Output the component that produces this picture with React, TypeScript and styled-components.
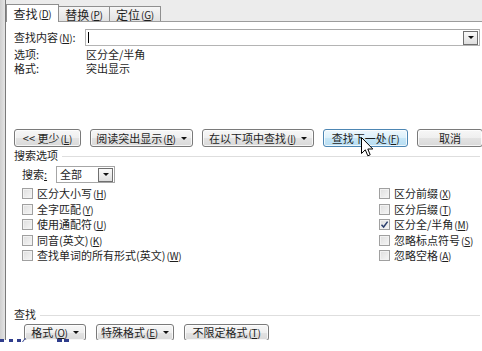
import React from 'react'
import styled, { createGlobalStyle } from 'styled-components'

const GlobalStyle = createGlobalStyle`
  html, body { margin: 0; padding: 0; background: #fff; }
  body {
    width: 482px;
    height: 351px;
    overflow: hidden;
    font-family: "Noto Sans CJK SC", "Liberation Sans", sans-serif;
    font-size: 11px;
    color: #1e1e1e;
  }
`

const Screen = styled.div`
  position: relative;
  width: 482px;
  height: 351px;
  display: flex;
  flex-direction: column;
  overflow: hidden;
`

const Frame = styled.div`
  display: flex;
  height: 340px;
  flex: none;
`

const LeftEdge = styled.div`
  width: 5px;
  flex: none;
  background: linear-gradient(to right, #cfcfcf, #e4e4e4);
  border-right: 1px solid #7a7a7a;
`

const Main = styled.div`
  flex: 1;
  min-width: 0;
  display: flex;
  flex-direction: column;
`

const TabStrip = styled.div`
  height: 21px;
  flex: none;
  background: #ececec;
  border-bottom: 1px solid #9c9c9c;
  display: flex;
  align-items: flex-end;
`

const Tab = styled.div<{ $active?: boolean; $w: number }>`
  box-sizing: border-box;
  width: ${p => p.$w}px;
  height: ${p => (p.$active ? 18 : 15)}px;
  margin-bottom: ${p => (p.$active ? -1 : 0)}px;
  margin-left: ${p => (p.$active ? 0 : -1)}px;
  border: 1px solid #8f8f8f;
  border-bottom: none;
  background: ${p => (p.$active ? '#fff' : 'linear-gradient(#f6f6f6, #e2e2e2)')};
  display: flex;
  align-items: center;
  justify-content: center;
  padding-top: ${p => (p.$active ? 0 : 1)}px;
  position: relative;
  z-index: ${p => (p.$active ? 1 : 0)};
  line-height: 1;
  font-size: 12px;
`

const Panel = styled.div`
  flex: 1;
  background: #fff;
  padding: 7px 2px 0 8px;
  display: flex;
  flex-direction: column;
`

const FindRow = styled.div`
  display: flex;
  align-items: center;
  height: 17px;
`

const FieldLabel = styled.div<{ $w: number }>`
  width: ${p => p.$w}px;
  flex: none;
  line-height: 1;
`

const TextBox = styled.div`
  flex: 1;
  box-sizing: border-box;
  height: 17px;
  border: 1px solid #b4b4b4;
  border-top-color: #a8a8a8;
  display: flex;
  align-items: center;
  justify-content: space-between;
  padding-left: 2px;
`

const Caret = styled.div`
  width: 1px;
  height: 11px;
  background: #000;
`

const DropButton = styled.div`
  box-sizing: border-box;
  width: 15px;
  height: 14px;
  margin-right: 1px;
  border: 1px solid #6f6f6f;
  background: linear-gradient(#fafafa, #dedede);
  display: flex;
  align-items: center;
  justify-content: center;
`

const Triangle = styled.span`
  width: 0;
  height: 0;
  border-left: 3px solid transparent;
  border-right: 3px solid transparent;
  border-top: 3px solid #111;
`

const InfoGrid = styled.div`
  display: grid;
  grid-template-columns: 72px 1fr;
  grid-auto-rows: 14px;
  margin-top: 1px;
  line-height: 14px;
`

const ButtonRow = styled.div<{ $top: number; $left: number; $gap: number }>`
  display: flex;
  gap: ${p => p.$gap}px;
  margin-top: ${p => p.$top}px;
  padding-left: ${p => p.$left}px;
`

const Button = styled.div<{ $w: number; $h?: number; $primary?: boolean }>`
  box-sizing: border-box;
  width: ${p => p.$w}px;
  height: ${p => p.$h ?? 18}px;
  flex: none;
  border: 1px solid ${p => (p.$primary ? '#4d86b3' : '#7a7a7a')};
  border-radius: 3px;
  background: ${p =>
    p.$primary
      ? 'linear-gradient(#eef8fd, #dbf0fb 50%, #c6e6f7 51%, #b7ddf2)'
      : 'linear-gradient(#f7f7f7, #efefef 50%, #e3e3e3 51%, #d9d9d9)'};
  box-shadow: inset 0 0 0 1px rgba(255, 255, 255, 0.75);
  display: flex;
  align-items: center;
  justify-content: center;
  gap: 5px;
  line-height: 1;
  white-space: nowrap;
`

const SectionHead = styled.div<{ $top: number }>`
  display: flex;
  align-items: center;
  gap: 4px;
  height: 14px;
  margin-top: ${p => p.$top}px;
  line-height: 1;
  &::after {
    content: '';
    flex: 1;
    height: 1px;
    margin-top: 2px;
    background: #dedede;
  }
`

const SearchRow = styled.div`
  display: flex;
  align-items: center;
  height: 17px;
  margin-top: 4px;
  padding-left: 8px;
`

const SelectBox = styled.div`
  box-sizing: border-box;
  width: 59px;
  height: 17px;
  border: 1px solid #a6a6a6;
  display: flex;
  align-items: center;
  justify-content: space-between;
  padding-left: 3px;
  line-height: 1;
`

const CheckGrid = styled.div`
  display: grid;
  grid-template-columns: 357px 1fr;
  grid-template-rows: repeat(5, 15.5px);
  grid-auto-flow: column;
  margin-top: 3px;
  padding-left: 8px;
`

const CheckItem = styled.div`
  display: flex;
  align-items: center;
  gap: 4px;
  line-height: 1;
  white-space: nowrap;
`

const Box = styled.div`
  box-sizing: border-box;
  width: 11px;
  height: 11px;
  border: 1px solid #a0a0a0;
  background: linear-gradient(135deg, #dedede, #f6f6f6);
  box-shadow: inset 0 0 0 1px #f2f2f2;
  display: flex;
  align-items: center;
  justify-content: center;
`

const KeyText = styled.span`
  font-size: 10px;
  letter-spacing: -0.2px;
  margin-left: 1px;
`

const Cursor = styled.svg`
  position: absolute;
  left: 361px;
  top: 137px;
`

const BottomStrip = styled.div`
  height: 11px;
  background: #fff;
`

const Marks = styled.svg`
  display: block;
  margin-top: -2px;
`

const Key = ({ k }: { k: string }) => (
  <KeyText>
    (<u>{k}</u>)
  </KeyText>
)

const leftChecks = [
  { label: '区分大小写', k: 'H' },
  { label: '全字匹配', k: 'Y' },
  { label: '使用通配符', k: 'U' },
  { label: '同音(英文)', k: 'K' },
  { label: '查找单词的所有形式(英文)', k: 'W' },
]

const rightChecks = [
  { label: '区分前缀', k: 'X' },
  { label: '区分后缀', k: 'T' },
  { label: '区分全/半角', k: 'M', checked: true },
  { label: '忽略标点符号', k: 'S' },
  { label: '忽略空格', k: 'A' },
]

const Check = ({ label, k, checked }: { label: string; k: string; checked?: boolean }) => (
  <CheckItem>
    <Box>
      {checked && (
        <svg width="9" height="9" viewBox="0 0 9 9">
          <path d="M1.5 4.8 L3.6 7 L7.6 1.6" fill="none" stroke="#2b3f6e" strokeWidth="1.5" />
        </svg>
      )}
    </Box>
    <span>
      {label}
      <Key k={k} />
    </span>
  </CheckItem>
)

export default function App() {
  return (
    <Screen>
      <GlobalStyle />
      <Frame>
        <LeftEdge />
        <Main>
          <TabStrip>
            <Tab $active $w={53}>
              查找<Key k="D" />
            </Tab>
            <Tab $w={52}>
              替换<Key k="P" />
            </Tab>
            <Tab $w={52}>
              定位<Key k="G" />
            </Tab>
          </TabStrip>
          <Panel>
            <FindRow>
              <FieldLabel $w={71}>
                查找内容<Key k="N" />:
              </FieldLabel>
              <TextBox>
                <Caret />
                <DropButton>
                  <Triangle />
                </DropButton>
              </TextBox>
            </FindRow>
            <InfoGrid>
              <span>选项:</span>
              <span>区分全/半角</span>
              <span>格式:</span>
              <span>突出显示</span>
            </InfoGrid>

            <ButtonRow $top={54} $left={0} $gap={9}>
              <Button $w={67}>
                <span>
                  &lt;&lt; 更少<Key k="L" />
                </span>
              </Button>
              <Button $w={103}>
                <span>
                  阅读突出显示<Key k="R" />
                </span>
                <Triangle />
              </Button>
              <Button $w={112}>
                <span>
                  在以下项中查找<Key k="I" />
                </span>
                <Triangle />
              </Button>
              <Button $w={85} $primary>
                <span>
                  查找下一处<Key k="F" />
                </span>
              </Button>
              <Button $w={66}>取消</Button>
            </ButtonRow>

            <SectionHead $top={1}>搜索选项</SectionHead>
            <SearchRow>
              <FieldLabel $w={34}>
                搜索<u>:</u>
              </FieldLabel>
              <SelectBox>
                <span>全部</span>
                <DropButton>
                  <Triangle />
                </DropButton>
              </SelectBox>
            </SearchRow>
            <CheckGrid>
              {leftChecks.map(c => (
                <Check key={c.k} {...c} />
              ))}
              {rightChecks.map(c => (
                <Check key={c.k} {...c} />
              ))}
            </CheckGrid>

            <SectionHead $top={43.5}>查找</SectionHead>
            <ButtonRow $top={3} $left={10} $gap={10}>
              <Button $w={62} $h={17}>
                <span>
                  格式<Key k="O" />
                </span>
                <Triangle />
              </Button>
              <Button $w={78} $h={17}>
                <span>
                  特殊格式<Key k="E" />
                </span>
                <Triangle />
              </Button>
              <Button $w={85} $h={17}>
                <span>
                  不限定格式<Key k="T" />
                </span>
              </Button>
            </ButtonRow>
          </Panel>
        </Main>
      </Frame>
      <BottomStrip>
        <Marks width="80" height="6" viewBox="0 0 80 6">
          <g fill="#2f3d8c">
            <rect x="0" y="1" width="4" height="3" />
            <rect x="9" y="1" width="4" height="3" />
            <rect x="17" y="1" width="4" height="3" />
            <path d="M22 4 L25 0 L26 0 L23 4 Z" />
            <rect x="57" y="1" width="5" height="3" />
            <rect x="64" y="1" width="5" height="3" />
          </g>
        </Marks>
      </BottomStrip>
      <Cursor width="13" height="21" viewBox="0 0 13 21">
        <path
          d="M0.5 0.5 L0.5 16.5 L4.3 12.8 L6.8 18.8 L9.2 17.8 L6.8 12 L11.8 12 Z"
          fill="#fff"
          stroke="#000"
          strokeWidth="1"
          strokeLinejoin="round"
        />
      </Cursor>
    </Screen>
  )
}
